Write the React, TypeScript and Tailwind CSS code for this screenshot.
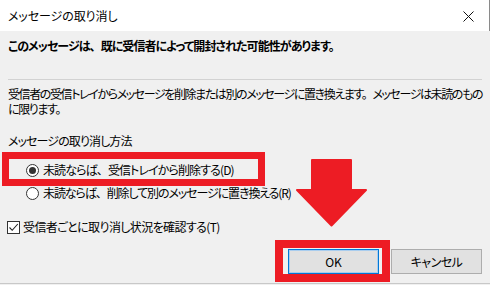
import React from "react";

const font = "font-['Noto_Sans_CJK_JP','Noto_Sans',sans-serif] [font-feature-settings:'palt']";

function Radio({ checked }: { checked?: boolean }) {
  return (
    <span className="w-[13px] h-[13px] rounded-full border border-[#333333] bg-white flex items-center justify-center shrink-0">
      {checked && <span className="w-[7px] h-[7px] rounded-full bg-[#333333]" />}
    </span>
  );
}

function Comma() {
  return <span className="mr-[6px]">、</span>;
}

export default function App() {
  return (
    <div className={`relative w-[490px] h-[285px] bg-[#f0f0f0] flex flex-col text-[12px] text-black ${font}`}>
      {/* Title bar */}
      <div className="h-[31px] w-[490px] bg-white border-r border-[#8a8a8a] flex items-center justify-between pl-[8px] pr-[15px] shrink-0">
        <span className="leading-[16px] whitespace-nowrap tracking-[-0.1px]">メッセージの取り消し</span>
        <svg width="11" height="11" viewBox="0 0 11 11" className="mt-[1px]">
          <path d="M0.5 0.5 L10.5 10.5 M10.5 0.5 L0.5 10.5" stroke="#111" strokeWidth="1" fill="none" />
        </svg>
      </div>

      {/* Body */}
      <div className="flex-1 flex flex-col tracking-[-0.9px]">
        <div className="mt-[7px] px-[8px] leading-[16px] font-bold whitespace-nowrap tracking-[-0.95px]">
          このメッセージは<Comma />既に受信者によって開封された可能性があります。
        </div>
        <div className="mt-[25px] mx-[8px] h-px bg-[#d2d2d2]" />
        <div className="mt-[6px] px-[8px] leading-[15px] whitespace-nowrap tracking-[-1.4px]">
          <div>
            受信者の受信トレイからメッセージを削除または別のメッセージに置き換えます<span className="mr-[6px]">。</span>メッセージは未読のもの
          </div>
          <div>に限ります。</div>
        </div>
        <div className="mt-[17px] px-[8px] leading-[15px] whitespace-nowrap">メッセージの取り消し方法</div>

        <div className="mt-[12px] h-[20px] pl-[26px] flex items-center gap-[4px] whitespace-nowrap">
          <Radio checked />
          <span>未読ならば<Comma />受信トレイから削除する(D)</span>
        </div>
        <div className="mt-[3px] h-[20px] pl-[26px] flex items-center gap-[4px] whitespace-nowrap tracking-[-1.1px]">
          <Radio />
          <span>未読ならば<Comma />削除して別のメッセージに置き換える(R)</span>
        </div>
        <div className="mt-[14px] h-[20px] pl-[7px] flex items-center gap-[3px] whitespace-nowrap tracking-[-0.6px]">
          <span className="w-[13px] h-[13px] border border-[#333333] bg-white flex items-center justify-center shrink-0">
            <svg width="11" height="11" viewBox="0 0 11 11">
              <path d="M1.5 5.5 L4.2 8.3 L9.8 2" stroke="#222" strokeWidth="1.1" fill="none" />
            </svg>
          </span>
          <span>受信者ごとに取り消し状況を確認する(T)</span>
        </div>

        <div className="mt-[12px] flex justify-end gap-[12px] pr-[8px] tracking-normal">
          <button className="w-[91px] h-[25px] bg-[#e1e1e1] border border-[#0078d7] shadow-[inset_0_0_0_1px_#a9cdee] flex items-center justify-center leading-none">
            OK
          </button>
          <button className="w-[91px] h-[25px] bg-[#e1e1e1] border border-[#adadad] flex items-center justify-center leading-none tracking-[-0.5px]">
            キャンセル
          </button>
        </div>
      </div>
      <div className="h-px bg-[#c8c8c8] mb-[1px]" />

      {/* Annotations */}
      <div className="absolute left-[2px] top-[152px] w-[263px] h-[34px] border-[7px] border-[#ed1c24]" />
      <div className="absolute left-[275px] top-[240px] w-[115px] h-[42px] border-[8px] border-[#ed1c24]" />
      <svg className="absolute left-[296px] top-[159px]" width="72" height="68" viewBox="0 0 72 68">
        <path
          d="M16 1 H55 V31 H70 L35.5 66.5 L1 31 H16 Z"
          fill="#ed1c24"
          stroke="#ed1c24"
          strokeWidth="2"
          strokeLinejoin="round"
        />
      </svg>
    </div>
  );
}
